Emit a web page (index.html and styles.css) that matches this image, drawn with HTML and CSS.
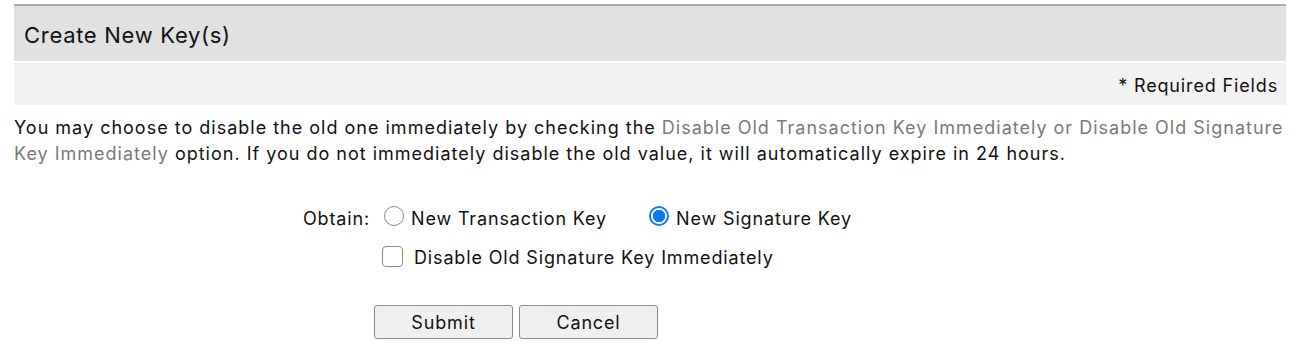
FILE: index.html
```html
<!DOCTYPE html>
<html lang="en">
<head>
    <meta charset="UTF-8">
    <title>Create New Key(s)</title>
    <link rel="stylesheet" href="styles.css">
</head>
<body>
    <div class="panel">
        <div class="panel-head">Create New Key(s)</div>
        <div class="panel-sub">* Required Fields</div>
    </div>
    <p class="intro">You may choose to disable the old one immediately by checking the <span class="muted">Disable Old Transaction Key Immediately or Disable Old Signature Key Immediately</span> option. If you do not immediately disable the old value, it will automatically expire in 24 hours.</p>
    <form class="key-form">
        <div class="row">
            <span class="label">Obtain:</span>
            <div class="options">
                <label class="opt"><input type="radio" name="obtain"> New Transaction Key</label>
                <label class="opt"><input type="radio" name="obtain" checked> New Signature Key</label>
            </div>
        </div>
        <div class="row">
            <span class="label"></span>
            <label class="opt check"><input type="checkbox"> Disable Old Signature Key Immediately</label>
        </div>
        <div class="buttons">
            <button type="button" class="btn">Submit</button>
            <button type="button" class="btn">Cancel</button>
        </div>
    </form>
</body>
</html>
```

FILE: styles.css
```css
body {
    margin: 0;
    font-family: Inter, "Open Sans", sans-serif;
    font-size: 18px;
    letter-spacing: 0.85px;
    color: #111;
    background: #fff;
}
.panel {
    margin: 4px 14px 0 14px;
}
.panel-head {
    border-top: 2px solid #ababab;
    background-color: #e1e1e1;
    height: 55px;
    line-height: 58px;
    padding-left: 10px;
    font-size: 22px;
    letter-spacing: 0.7px;
}
.panel-sub {
    margin-top: 2px;
    background-color: #f2f2f2;
    height: 42px;
    line-height: 46px;
    text-align: right;
    padding-right: 8px;
}
.intro {
    margin: 10px 6px 0 14px;
    line-height: 26px;
    letter-spacing: 1px;
}
.muted {
    color: #7a7a7a;
}
.key-form {
    margin-top: 32px;
}
.row {
    display: flex;
    align-items: center;
    height: 39px;
}
.label {
    width: 370px;
    text-align: right;
    margin-right: 14px;
}
.options {
    display: flex;
    gap: 42px;
}
.opt {
    display: flex;
    align-items: center;
    gap: 7px;
}
.opt input {
    appearance: none;
    margin: 0;
    width: 20px;
    height: 20px;
    border: 1px solid #8a8a8a;
    background: #fff;
    position: relative;
    top: -3px;
}
.opt input[type="radio"] {
    border-radius: 50%;
}
.opt input[type="radio"]:checked {
    border: 2px solid #0a7aff;
    background: radial-gradient(circle, #0a7aff 0 6px, #fff 6.5px);
}
.check {
    gap: 11px;
    margin-left: -2px;
}
.opt input[type="checkbox"] {
    border-radius: 4px;
    width: 21px;
    height: 21px;
    top: -1px;
}
.buttons {
    display: flex;
    gap: 6px;
    margin: 28px 0 0 374px;
}
.btn {
    width: 139px;
    height: 34px;
    font-family: inherit;
    font-size: 18px;
    letter-spacing: 0.85px;
    color: #111;
    background-color: #efefef;
    border: 1px solid #8a8a8a;
    border-radius: 3px;
    padding: 0;
}
```
